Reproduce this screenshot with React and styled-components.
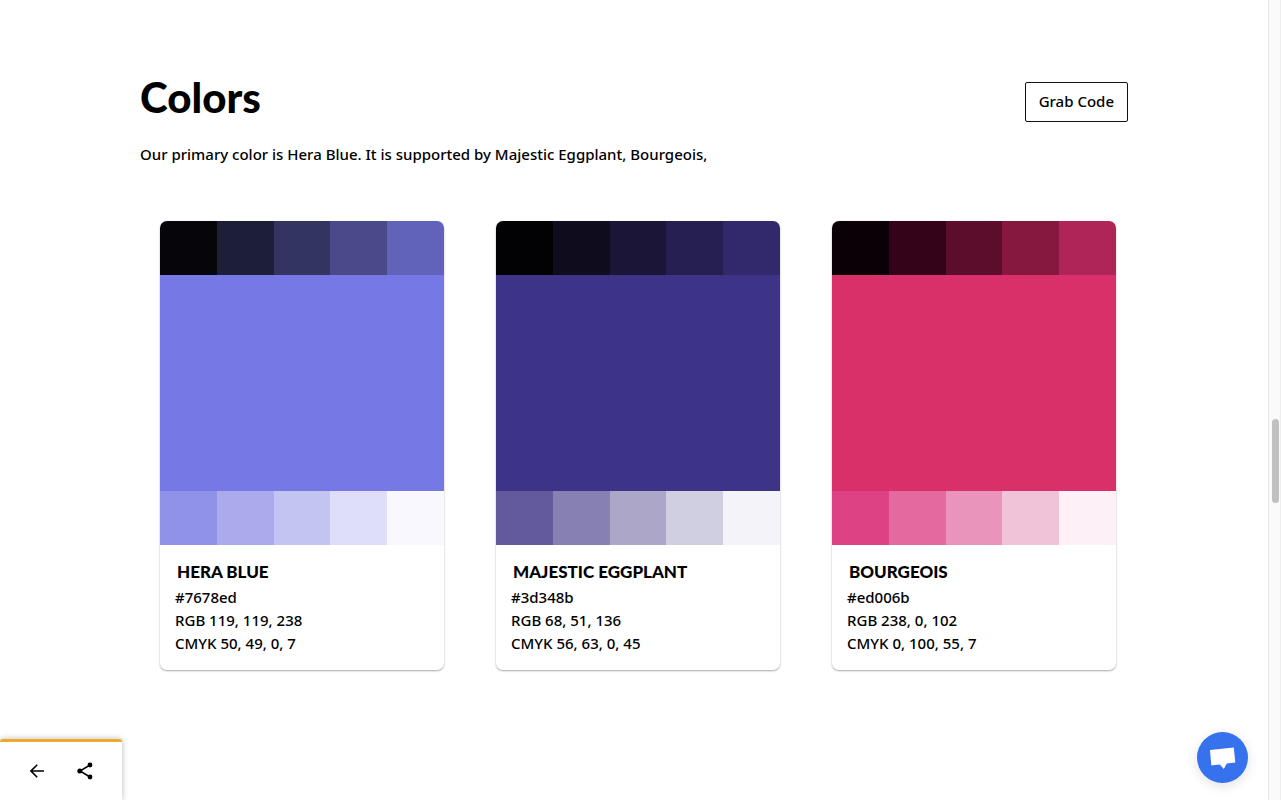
import styled, { createGlobalStyle } from 'styled-components';

const GlobalStyle = createGlobalStyle`
  * {
    box-sizing: border-box;
  }
  html {
    scrollbar-width: none;
  }
  body {
    margin: 0;
    background: #fff;
    color: #000;
    font-family: 'Noto Sans', 'Open Sans', sans-serif;
    font-size: 15px;
    font-weight: 500;
    line-height: 23px;
  }
  h1, h2, p {
    margin: 0;
  }
`;

const Page = styled.div`
  display: flex;
  min-height: 100vh;
`;

const Main = styled.main`
  flex: 1;
  min-width: 0;
  padding: 72px 140px 96px;
`;

const SectionHeader = styled.header`
  display: flex;
  justify-content: space-between;
  align-items: flex-start;
  margin-bottom: 11px;
`;

const Heading = styled.h1`
  font-family: Lato, sans-serif;
  font-size: 42px;
  font-weight: 900;
  line-height: 50px;
`;

const CodeButton = styled.button`
  height: 40px;
  margin: 10px 0;
  padding: 0 13px 1px;
  border: 1px solid #111;
  border-radius: 2px;
  background: #fff;
  color: #000;
  font: inherit;
  cursor: pointer;
`;

const Swatches = styled.div`
  display: grid;
  grid-template-columns: repeat(3, 1fr);
  gap: 52px;
  margin-top: 55px;
  padding: 0 12px 0 20px;
`;

const StyledCard = styled.article`
  overflow: hidden;
  border-radius: 7px;
  background: #fff;
  box-shadow: 0 1px 2px rgba(0, 0, 0, 0.35);
`;

const Strip = styled.div`
  display: flex;
  height: 54px;
`;

const Tone = styled.div`
  flex: 1;
  background: ${({ $color }) => $color};
`;

const Primary = styled.div`
  height: 216px;
  background: ${({ $color }) => $color};
`;

const CardBody = styled.div`
  padding: 15px;
`;

const ColorName = styled.h2`
  padding: 0 2px 3px;
  font-family: Lato, sans-serif;
  font-size: 17px;
  font-weight: 900;
  line-height: 23px;
  text-transform: uppercase;
`;

const Toolbar = styled.nav`
  position: fixed;
  bottom: 0;
  left: 0;
  display: flex;
  gap: 24px;
  padding: 17px 25px;
  border-top: 3px solid #efa92f;
  border-radius: 3px 3px 0 0;
  background: #fff;
  box-shadow: 0 0 6px rgba(0, 0, 0, 0.28);
`;

const IconButton = styled.button`
  display: flex;
  align-items: center;
  justify-content: center;
  width: 24px;
  height: 24px;
  padding: 0;
  border: 0;
  background: none;
  cursor: pointer;
`;

const ChatButton = styled(IconButton)`
  position: fixed;
  right: 33px;
  bottom: 17px;
  width: 51px;
  height: 51px;
  border-radius: 50%;
  background: #3671ee;
  box-shadow: 0 3px 12px rgba(0, 0, 0, 0.12);
`;

const ScrollTrack = styled.div`
  position: sticky;
  top: 0;
  width: 13px;
  height: 100vh;
  padding: 419px 2px 0 3px;
  border-left: 1px solid #e8e8e8;
  border-right: 1px solid #eee;
  background: #fafafa;
`;

const ScrollThumb = styled.div`
  width: 7px;
  height: 84px;
  border-radius: 4px;
  background: #c1c1c1;
`;

const colors = [
  {
    name: 'Hera Blue',
    primary: '#7678e5',
    dark: ['#05050a', '#1d1e38', '#343461', '#4a4a8b', '#6162b9'],
    light: ['#9091e9', '#aaaaed', '#c4c4f2', '#dedefa', '#f8f8fe'],
    hex: '#7678ed',
    rgb: '119, 119, 238',
    cmyk: '50, 49, 0, 7',
  },
  {
    name: 'Majestic Eggplant',
    primary: '#3d3487',
    dark: ['#020205', '#0f0c1d', '#1b1637', '#252051', '#31296b'],
    light: ['#625a9c', '#8681b2', '#aca7c9', '#d0cee1', '#f4f3f9'],
    hex: '#3d348b',
    rgb: '68, 51, 136',
    cmyk: '56, 63, 0, 45',
  },
  {
    name: 'Bourgeois',
    primary: '#d9306a',
    dark: ['#0a0005', '#340219', '#5c0d2b', '#861840', '#b02557'],
    light: ['#dd4384', '#e3699f', '#e995bb', '#f1c3d9', '#fdf1f7'],
    hex: '#ed006b',
    rgb: '238, 0, 102',
    cmyk: '0, 100, 55, 7',
  },
];

const ColorCard = ({ color }) => (
  <StyledCard>
    <Strip>
      {color.dark.map((tone) => (
        <Tone key={tone} $color={tone} />
      ))}
    </Strip>
    <Primary $color={color.primary} />
    <Strip>
      {color.light.map((tone) => (
        <Tone key={tone} $color={tone} />
      ))}
    </Strip>
    <CardBody>
      <ColorName>{color.name}</ColorName>
      <p>{color.hex}</p>
      <p>RGB {color.rgb}</p>
      <p>CMYK {color.cmyk}</p>
    </CardBody>
  </StyledCard>
);

const BackIcon = () => (
  <svg width="14" height="14" viewBox="0 0 14 14" fill="none" stroke="#000" strokeWidth="1.6">
    <path d="M14 7H1.5M7.2 .8L1 7l6.200 6.200" />
  </svg>
);

const ShareIcon = () => (
  <svg width="18" height="18" viewBox="0 0 18 18">
    <path d="M14 3L4 9l10 6" fill="none" stroke="#000" strokeWidth="1.5" />
    <circle cx="14" cy="3" r="2.4" />
    <circle cx="3.8" cy="9" r="2.5" />
    <circle cx="14" cy="15" r="2.4" />
  </svg>
);

const ChatIcon = () => (
  <svg width="28" height="24" viewBox="0 0 28 24" fill="#fff">
    <path d="M1 4L24.800 1.500L26.300 16.500L17.800 17.600L14.800 23L10.800 18.500L2.300 19.500z" />
  </svg>
);

const App = () => {
  return (
    <>
      <GlobalStyle />
      <Page>
        <Main>
          <SectionHeader>
            <Heading>Colors</Heading>
            <CodeButton type="button">Grab Code</CodeButton>
          </SectionHeader>
          <p>
            Our primary color is Hera Blue. It is supported by Majestic
            Eggplant, Bourgeois,
          </p>
          <Swatches>
            {colors.map((color) => (
              <ColorCard key={color.name} color={color} />
            ))}
          </Swatches>
        </Main>
        <ScrollTrack aria-hidden="true">
          <ScrollThumb />
        </ScrollTrack>
      </Page>
      <Toolbar>
        <IconButton type="button" aria-label="Back">
          <BackIcon />
        </IconButton>
        <IconButton type="button" aria-label="Share">
          <ShareIcon />
        </IconButton>
      </Toolbar>
      <ChatButton type="button" aria-label="Open chat">
        <ChatIcon />
      </ChatButton>
    </>
  );
};
export default App;
